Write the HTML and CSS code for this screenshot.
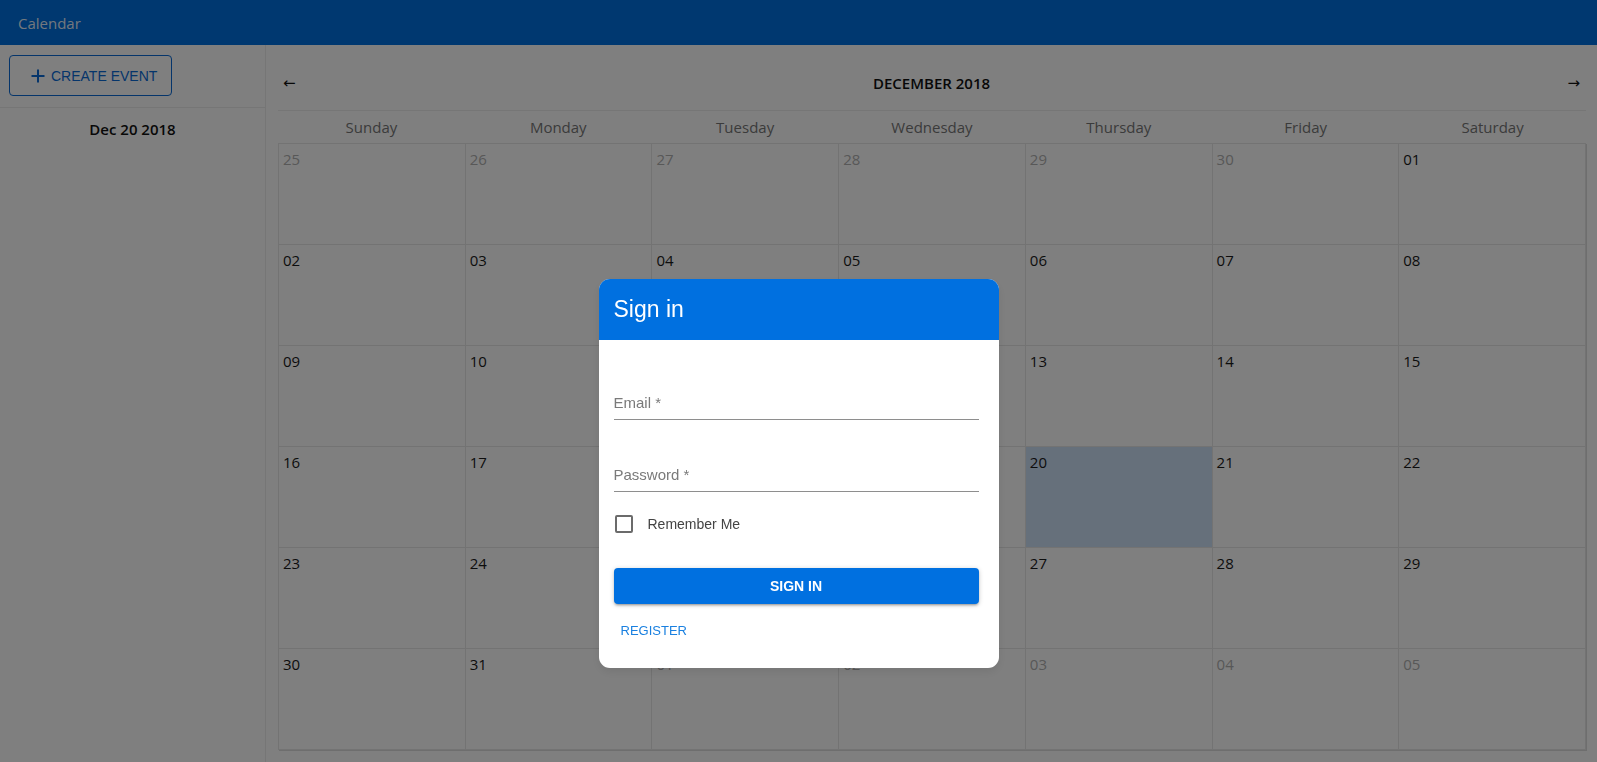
FILE: index.html
```html
<!DOCTYPE html>
<html lang="en">
<head>
<meta charset="utf-8">
<title>Calendar</title>
<link rel="stylesheet" href="styles.css">
</head>
<body>
<header class="appbar"><span class="appbar-title">Calendar</span></header>
<div class="app">
  <aside class="sidebar">
    <div class="sidebar-top">
      <button class="create-btn" type="button">
        <svg class="plus" width="14" height="14" viewBox="0 0 14 14"><path d="M7 0.5V13.5M0.5 7H13.5" stroke="currentColor" stroke-width="2" fill="none"/></svg>
        <span>CREATE EVENT</span>
      </button>
    </div>
    <div class="sidebar-date">Dec 20 2018</div>
  </aside>
  <main class="main">
    <div class="cal-nav">
      <span class="arrow">&larr;</span>
      <span class="month">DECEMBER 2018</span>
      <span class="arrow">&rarr;</span>
    </div>
    <div class="weekdays">
      <div>Sunday</div><div>Monday</div><div>Tuesday</div><div>Wednesday</div><div>Thursday</div><div>Friday</div><div>Saturday</div>
    </div>
    <div class="grid">
      <div class="cell out">25</div><div class="cell out">26</div><div class="cell out">27</div><div class="cell out">28</div><div class="cell out">29</div><div class="cell out">30</div><div class="cell">01</div>
      <div class="cell">02</div><div class="cell">03</div><div class="cell">04</div><div class="cell">05</div><div class="cell">06</div><div class="cell">07</div><div class="cell">08</div>
      <div class="cell">09</div><div class="cell">10</div><div class="cell">11</div><div class="cell">12</div><div class="cell">13</div><div class="cell">14</div><div class="cell">15</div>
      <div class="cell">16</div><div class="cell">17</div><div class="cell">18</div><div class="cell">19</div><div class="cell today">20</div><div class="cell">21</div><div class="cell">22</div>
      <div class="cell">23</div><div class="cell">24</div><div class="cell">25</div><div class="cell">26</div><div class="cell">27</div><div class="cell">28</div><div class="cell">29</div>
      <div class="cell">30</div><div class="cell">31</div><div class="cell out">01</div><div class="cell out">02</div><div class="cell out">03</div><div class="cell out">04</div><div class="cell out">05</div>
    </div>
  </main>
</div>

<div class="backdrop">
  <div class="dialog">
    <div class="dialog-head">Sign in</div>
    <div class="dialog-body">
      <div class="field"><span class="label">Email *</span></div>
      <div class="field second"><span class="label">Password *</span></div>
      <label class="remember"><span class="checkbox"></span><span>Remember Me</span></label>
      <button class="signin-btn" type="button">SIGN IN</button>
      <button class="register-btn" type="button">REGISTER</button>
    </div>
  </div>
</div>
</body>
</html>
```
FILE: styles.css
```css
* { box-sizing: border-box; }
html, body { margin: 0; height: 100%; }
body {
  font-family: "Open Sans", "Liberation Sans", sans-serif;
  background: #fff;
  color: #222;
  overflow: hidden;
}
.appbar {
  height: 45px;
  background: #0070e0;
  display: flex;
  align-items: center;
  padding-left: 18px;
}
.appbar-title {
  color: rgba(255,255,255,0.92);
  font-size: 15px;
}
.app {
  display: flex;
  height: calc(100vh - 45px);
}
.sidebar {
  width: 266px;
  flex: none;
  border-right: 1px solid #ececec;
}
.sidebar-top {
  padding: 10px 9px 11px;
  border-bottom: 1px solid #ececec;
}
.create-btn {
  width: 163px;
  height: 41px;
  border: 1px solid #0a6bd6;
  border-radius: 4px;
  background: #fff;
  color: #0a6bd6;
  font-family: "Liberation Sans", Arial, sans-serif;
  font-size: 14px;
  display: flex;
  align-items: center;
  padding: 0 0 0 21px;
  gap: 6px;
}
.plus { flex: none; }
.sidebar-date {
  text-align: center;
  font-weight: 600;
  font-size: 15px;
  padding-top: 10px;
  line-height: 22px;
  color: #111;
}
.main {
  flex: 1;
  padding: 0 11px 0 12px;
  min-width: 0;
}
.cal-nav {
  display: flex;
  justify-content: space-between;
  align-items: center;
  padding: 26px 6px 15px 5px;
  line-height: 24px;
  border-bottom: 1px solid #ececec;
}
.arrow {
  font-family: "DejaVu Sans", sans-serif;
  font-size: 15px;
  color: #111;
}
.month {
  font-weight: 600;
  font-size: 15px;
  color: #111;
}
.weekdays {
  display: grid;
  grid-template-columns: repeat(7, 1fr);
  height: 32px;
  line-height: 32px;
  text-align: center;
  font-size: 15px;
  color: #777;
}
.grid {
  display: grid;
  grid-template-columns: repeat(7, 1fr);
  grid-template-rows: repeat(6, 101px);
  border-top: 1px solid #e6e6e6;
  border-left: 1px solid #e6e6e6;
  box-shadow: 1px 1px 0 #dcdcdc;
}
.cell {
  border-right: 1px solid #e6e6e6;
  border-bottom: 1px solid #e6e6e6;
  padding: 5px 4px 0;
  font-size: 15px;
  line-height: 20px;
  color: #1a1a1a;
}
.cell.out { color: #b0b0b0; }
.cell.today { background: #cde0f7; }

.backdrop {
  position: fixed;
  inset: 0;
  background: rgba(0,0,0,0.5);
  display: flex;
  justify-content: center;
  align-items: flex-start;
  padding-top: 279px;
}
.dialog {
  width: 400px;
  background: #fff;
  border-radius: 11px;
  overflow: hidden;
  font-family: "Liberation Sans", Arial, sans-serif;
  box-shadow: 0 4px 10px rgba(0,0,0,0.08);
}
.dialog-head {
  height: 61px;
  background: #0070e0;
  color: #fff;
  font-size: 23px;
  display: flex;
  align-items: center;
  padding-left: 15px;
}
.dialog-body {
  padding: 31px 20px 20px 15px;
  display: flex;
  flex-direction: column;
}
.field {
  height: 49px;
  padding-top: 22px;
  border-bottom: 1px solid #8e8e8e;
}
.field.second { margin-top: 23px; }
.label {
  display: block;
  font-size: 15px;
  line-height: 20px;
  color: #7a7a7a;
}
.remember {
  margin-top: 23px;
  display: flex;
  align-items: center;
  gap: 15px;
  height: 18px;
  font-size: 14px;
  color: #444;
}
.checkbox {
  width: 18px;
  height: 18px;
  margin-left: 1px;
  border: 2px solid #6b6b6b;
  border-radius: 2px;
}
.signin-btn {
  margin-top: 35px;
  height: 36px;
  width: 100%;
  border: 0;
  border-radius: 4px;
  background: #0070e0;
  color: #fff;
  font-family: "Liberation Sans", Arial, sans-serif;
  font-weight: bold;
  font-size: 14px;
  box-shadow: 0 1px 5px rgba(0,0,0,0.2), 0 2px 2px rgba(0,0,0,0.14), 0 3px 1px -2px rgba(0,0,0,0.12);
}
.register-btn {
  margin-top: 8px;
  height: 36px;
  align-self: flex-start;
  border: 0;
  background: transparent;
  color: #1a80e0;
  font-family: "Liberation Sans", Arial, sans-serif;
  font-size: 13px;
  padding: 0 7px;
}
```
